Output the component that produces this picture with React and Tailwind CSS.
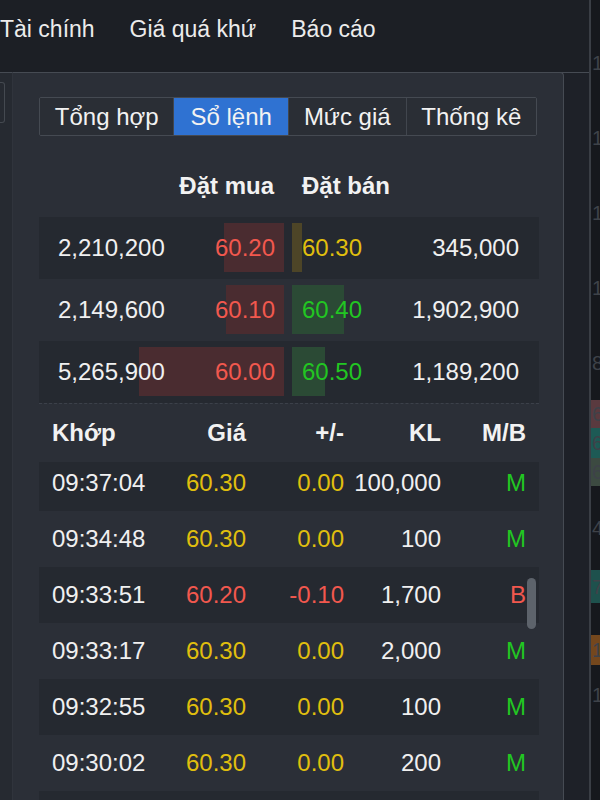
import React from 'react';

const FONT = "font-['Liberation_Sans',Arial,Helvetica,sans-serif]";

const bids = [
  { vol: '2,210,200', price: '60.20', bar: 60 },
  { vol: '2,149,600', price: '60.10', bar: 58 },
  { vol: '5,265,900', price: '60.00', bar: 145 },
];

const asks = [
  { price: '60.30', vol: '345,000', bar: 10, tone: 'ref' },
  { price: '60.40', vol: '1,902,900', bar: 52, tone: 'up' },
  { price: '60.50', vol: '1,189,200', bar: 33, tone: 'up' },
];

const trades = [
  ['09:37:04', '60.30', '0.00', '100,000', 'M'],
  ['09:34:48', '60.30', '0.00', '100', 'M'],
  ['09:33:51', '60.20', '-0.10', '1,700', 'B'],
  ['09:33:17', '60.30', '0.00', '2,000', 'M'],
  ['09:32:55', '60.30', '0.00', '100', 'M'],
  ['09:30:02', '60.30', '0.00', '200', 'M'],
  ['', '', '', '', ''],
];

const priceColor = (p) => (p === '60.30' ? 'text-[#e0bf0e]' : p < '60.30' ? 'text-[#f2584e]' : 'text-[#22c622]');
const changeColor = (c) => (c.startsWith('-') ? 'text-[#f2584e]' : 'text-[#e0bf0e]');

function Tabs() {
  const tabs = [
    { label: 'Tổng hợp', w: 'w-[134px]' },
    { label: 'Sổ lệnh', w: 'w-[115px]', active: true },
    { label: 'Mức giá', w: 'w-[118px]' },
    { label: 'Thống kê', w: 'w-[131px]' },
  ];
  return (
    <div className="flex w-[498px] h-[39px] border border-[#454a52] rounded-[2px] overflow-hidden">
      {tabs.map((t, i) => (
        <div
          key={t.label}
          className={`${t.w} flex items-center justify-center text-[24px] text-[#f2f2f2] ${
            t.active ? 'bg-[#2f72d2]' : 'bg-[#2a2e35]'
          } ${i > 0 ? 'border-l border-[#41464e]' : ''}`}
        >
          {t.label}
        </div>
      ))}
    </div>
  );
}

function OrderBook() {
  return (
    <div className="w-[500px]">
      <div className="flex h-[81px] pt-[19px] items-center text-[24px] font-bold text-[#f2f2f2]">
        <div className="w-[249px] text-right pr-[14px]">Đặt mua</div>
        <div className="flex-1 pl-[14px]">Đặt bán</div>
      </div>
      <div className="border-b border-dashed border-[#3c414a]">
        {bids.map((b, i) => {
          const a = asks[i];
          return (
            <div key={i} className={`flex h-[62px] text-[24px] ${i % 2 === 0 ? 'bg-[#252930]' : ''}`}>
              <div className="relative w-[249px] flex items-center">
                <div className="absolute right-[4px] top-[6px] bottom-[7px] bg-[#4a2c30]" style={{ width: b.bar }} />
                <span className="relative flex-1 pl-[19px] text-[#f0f0f0]">{b.vol}</span>
                <span className="relative pr-[13px] text-[#f2584e]">{b.price}</span>
              </div>
              <div className="relative flex-1 flex items-center">
                <div
                  className={`absolute left-[4px] top-[6px] bottom-[7px] ${a.tone === 'ref' ? 'bg-[#4d4527]' : 'bg-[#2b4a35]'}`}
                  style={{ width: a.bar }}
                />
                <span className={`relative pl-[14px] ${a.tone === 'ref' ? 'text-[#e0bf0e]' : 'text-[#22c622]'}`}>{a.price}</span>
                <span className="relative flex-1 text-right pr-[20px] text-[#f0f0f0]">{a.vol}</span>
              </div>
            </div>
          );
        })}
      </div>
    </div>
  );
}

function Trades() {
  const cols = 'grid grid-cols-[107px_100px_98px_97px_85px] pr-[13px]';
  return (
    <div className="w-[500px]">
      <div className={`${cols} h-[58px] items-center text-[24px] font-bold text-[#f2f2f2]`}>
        <div className="pl-[13px]">Khớp</div>
        <div className="text-right">Giá</div>
        <div className="text-right">+/-</div>
        <div className="text-right">KL</div>
        <div className="text-right">M/B</div>
      </div>
      <div className="relative h-[338px] overflow-hidden">
        <div className="-mt-[7px]">
          {trades.map((t, i) => (
            <div key={i} className={`${cols} h-[56px] items-center text-[24px] ${i % 2 === 0 ? 'bg-[#252930]' : ''}`}>
              <div className="pl-[13px] text-[#f0f0f0]">{t[0]}</div>
              <div className={`text-right ${priceColor(t[1])}`}>{t[1]}</div>
              <div className={`text-right ${changeColor(t[2])}`}>{t[2]}</div>
              <div className="text-right text-[#f0f0f0]">{t[3]}</div>
              <div className={`text-right ${t[4] === 'M' ? 'text-[#22c622]' : 'text-[#f2584e]'}`}>{t[4]}</div>
            </div>
          ))}
        </div>
        <div className="absolute left-[488px] top-[116px] w-[9px] h-[51px] rounded-full bg-[#5d636b]" />
      </div>
    </div>
  );
}

function SideStrip() {
  const cells = [
    { h: 'h-[25px]', t: '', bg: '' },
    { h: 'h-[75px]', t: '1', bg: '' },
    { h: 'h-[75px]', t: '1', bg: '' },
    { h: 'h-[75px]', t: '1', bg: '' },
    { h: 'h-[75px]', t: '1', bg: '' },
    { h: 'h-[75px]', t: '8', bg: '' },
    { h: 'h-[28px]', t: '6', bg: 'bg-[#5a3a3f]' },
    { h: 'h-[30px]', t: '6', bg: 'bg-[#1d5a55]' },
    { h: 'h-[28px]', t: '6', bg: 'bg-[#3c4a41]' },
    { h: 'h-[84px]', t: '4', bg: '' },
    { h: 'h-[33px]', t: '7', bg: 'bg-[#1e514d]' },
    { h: 'h-[32px]', t: '', bg: '' },
    { h: 'h-[30px]', t: '1', bg: 'bg-[#74471d]' },
    { h: 'h-[60px]', t: '1', bg: '' },
  ];
  return (
    <div className="w-[9px] h-[800px] bg-[#16181d] overflow-hidden">
      {cells.map((c, i) => (
        <div key={i} className={`${c.h} ${c.bg} flex items-center text-[20px] leading-none text-[#3e4249] pl-[1px]`}>
          {c.t}
        </div>
      ))}
    </div>
  );
}

export default function App() {
  return (
    <div className={`${FONT} w-[600px] h-[800px] overflow-hidden flex bg-[#1c1f25]`}>
      <div className="w-[589px] flex flex-col">
        <div className="h-[72px] flex items-center gap-[35px] pb-[14px] text-[23px] text-[#ececec] whitespace-nowrap">
          <span>Tài chính</span>
          <span>Giá quá khứ</span>
          <span>Báo cáo</span>
        </div>
        <div className="flex-1 flex border-t border-[#464b53]">
          <div className="w-[12px] bg-[#262a31]">
            <div className="mt-[9px] w-[5px] h-[41px] border border-l-0 border-[#444950] rounded-r-[3px]" />
          </div>
          <div className="w-[552px] -mt-px bg-[#2b2f37] border-t border-r border-l border-[#464b53] border-l-[#30343c] rounded-tr-[4px] pl-[26px] pt-[24px]">
            <Tabs />
            <OrderBook />
            <Trades />
          </div>
          <div className="flex-1 bg-[#1e2128]" />
        </div>
      </div>
      <div className="w-[2px] bg-[#3a3e45]" />
      <SideStrip />
    </div>
  );
}
